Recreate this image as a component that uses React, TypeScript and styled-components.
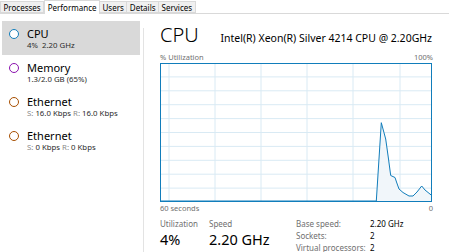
import React from 'react';
import styled, { createGlobalStyle } from 'styled-components';

const GlobalStyle = createGlobalStyle`
  * {
    margin: 0;
    padding: 0;
    box-sizing: border-box;
  }
  html, body {
    width: 449px;
    height: 252px;
    overflow: hidden;
    background: #ffffff;
    font-family: 'Segoe UI', 'Noto Sans', 'Open Sans', sans-serif;
    color: #000;
  }
`;

const Window = styled.div`
  width: 449px;
  height: 252px;
  display: flex;
  flex-direction: column;
`;

const TabBar = styled.div`
  height: 14px;
  display: flex;
  align-items: flex-end;
  border-bottom: 1px solid #d9d9d9;
`;

const Tab = styled.div<{ $active?: boolean; $first?: boolean }>`
  height: ${p => (p.$active ? '14px' : '12px')};
  margin-bottom: ${p => (p.$active ? '-1px' : '0')};
  padding: 0 2.5px;
  font-size: 8px;
  line-height: ${p => (p.$active ? '13px' : '11px')};
  background: ${p => (p.$active ? '#ffffff' : '#f0f0f0')};
  border: 1px solid #d9d9d9;
  border-bottom: ${p => (p.$active ? 'none' : '1px solid #d9d9d9')};
  border-left: ${p => (p.$active || p.$first ? '1px solid #d9d9d9' : 'none')};
  color: #000;
  white-space: nowrap;
`;

const Main = styled.div`
  flex: 1;
  display: flex;
`;

const Sidebar = styled.div`
  width: 143px;
  padding: 7px 3px 0 2px;
  display: flex;
  flex-direction: column;
`;

const Item = styled.div<{ $selected?: boolean }>`
  height: 34px;
  display: flex;
  align-items: flex-start;
  padding: 6px 0 0 7px;
  background: ${p => (p.$selected ? '#d9d9d9' : 'transparent')};
`;

const Dot = styled.div<{ $color: string }>`
  width: 10px;
  height: 10px;
  margin-top: 2px;
  border-radius: 50%;
  border: 1.3px solid ${p => p.$color};
  background: #fff;
  flex-shrink: 0;
`;

const ItemText = styled.div`
  margin-left: 8px;
  display: flex;
  flex-direction: column;
`;

const ItemTitle = styled.div`
  font-size: 11px;
  line-height: 13px;
  color: #000;
`;

const ItemSub = styled.div`
  font-size: 7.8px;
  line-height: 10px;
  color: #2b2b2b;
  white-space: nowrap;
`;

const Muted = styled.span`
  color: #8a8a8a;
`;

const Divider = styled.div`
  width: 1px;
  margin-top: 14px;
  background: #e3e3e3;
`;

const Content = styled.div`
  flex: 1;
  padding: 8px 16px 0 16px;
  display: flex;
  flex-direction: column;
`;

const Header = styled.div`
  display: flex;
  align-items: baseline;
  justify-content: space-between;
  height: 26px;
`;

const BigTitle = styled.div`
  font-size: 20px;
  font-weight: 300;
  line-height: 26px;
`;

const Model = styled.div`
  font-size: 10.5px;
  color: #000;
  white-space: nowrap;
  margin-right: 1px;
`;

const AxisRow = styled.div<{ $top?: number }>`
  display: flex;
  justify-content: space-between;
  font-size: 7.5px;
  line-height: 10px;
  color: #707070;
  margin-top: ${p => p.$top ?? 0}px;
`;

const Chart = styled.svg`
  display: block;
  width: 272px;
  height: 139px;
  margin-top: 1px;
`;

const Stats = styled.div`
  display: flex;
  margin-top: 5px;
`;

const Stat = styled.div<{ $width: number }>`
  width: ${p => p.$width}px;
  display: flex;
  flex-direction: column;
  white-space: nowrap;
`;

const StatLabel = styled.div`
  font-size: 8px;
  line-height: 11px;
  color: #707070;
`;

const StatValue = styled.div`
  font-size: 14.5px;
  line-height: 20px;
  color: #000;
`;

const Specs = styled.div`
  display: grid;
  grid-template-columns: 74px auto;
  grid-auto-rows: 12px;
  font-size: 8px;
  line-height: 12px;
`;

const SpecKey = styled.div`
  color: #707070;
  white-space: nowrap;
`;

const SpecVal = styled.div`
  color: #000;
`;

const hLines = Array.from({ length: 9 }, (_, i) => (i + 1) * 13.9);
const vLines = [9, 55, 101, 147, 193, 240];
const pts: [number, number][] = [
  [0, 138], [216.3, 138], [221.3, 59.7], [225.7, 76], [228.5, 96], [230.7, 112.5],
  [235, 114.5], [236.5, 119], [239, 126], [243, 129.5], [249, 133], [253, 133],
  [257, 129], [261.7, 123], [265, 127], [272, 132.7],
];

function CpuChart() {
  const line = pts.map(p => p.join(',')).join(' ');
  const area = `0,139 ${line} 272,139`;
  return (
    <Chart viewBox="0 0 272 139">
      {hLines.map(y => (
        <line key={y} x1="0" x2="272" y1={y} y2={y} stroke="#d9eaf4" strokeWidth="1" />
      ))}
      {vLines.map(x => (
        <line key={x} x1={x} x2={x} y1="0" y2="139" stroke="#d9eaf4" strokeWidth="1" />
      ))}
      <polygon points={area} fill="#f1f6fa" />
      <polyline points={line} fill="none" stroke="#117dbb" strokeWidth="1" />
      <rect x="0.5" y="0.5" width="271" height="138" fill="none" stroke="#117dbb" strokeWidth="1" />
    </Chart>
  );
}

export default function App() {
  return (
    <>
      <GlobalStyle />
      <Window>
        <TabBar>
          <Tab $first>Processes</Tab>
          <Tab $active>Performance</Tab>
          <Tab>Users</Tab>
          <Tab>Details</Tab>
          <Tab>Services</Tab>
        </TabBar>
        <Main>
          <Sidebar>
            <Item $selected>
              <Dot $color="#117dbb" />
              <ItemText>
                <ItemTitle>CPU</ItemTitle>
                <ItemSub>4%&nbsp;&nbsp;2.20 GHz</ItemSub>
              </ItemText>
            </Item>
            <Item>
              <Dot $color="#8b12ae" />
              <ItemText>
                <ItemTitle>Memory</ItemTitle>
                <ItemSub>1.3/2.0 GB (65%)</ItemSub>
              </ItemText>
            </Item>
            <Item>
              <Dot $color="#a74f01" />
              <ItemText>
                <ItemTitle>Ethernet</ItemTitle>
                <ItemSub><Muted>S:</Muted> 16.0 Kbps <Muted>R:</Muted> 16.0 Kbps</ItemSub>
              </ItemText>
            </Item>
            <Item>
              <Dot $color="#a74f01" />
              <ItemText>
                <ItemTitle>Ethernet</ItemTitle>
                <ItemSub><Muted>S:</Muted> 0 Kbps <Muted>R:</Muted> 0 Kbps</ItemSub>
              </ItemText>
            </Item>
          </Sidebar>
          <Divider />
          <Content>
            <Header>
              <BigTitle>CPU</BigTitle>
              <Model>Intel(R) Xeon(R) Silver 4214 CPU @ 2.20GHz</Model>
            </Header>
            <AxisRow $top={4}>
              <span>% Utilization</span>
              <span>100%</span>
            </AxisRow>
            <CpuChart />
            <AxisRow $top={1}>
              <span>60 seconds</span>
              <span>0</span>
            </AxisRow>
            <Stats>
              <Stat $width={49}>
                <StatLabel>Utilization</StatLabel>
                <StatValue>4%</StatValue>
              </Stat>
              <Stat $width={87}>
                <StatLabel>Speed</StatLabel>
                <StatValue>2.20 GHz</StatValue>
              </Stat>
              <Specs>
                <SpecKey>Base speed:</SpecKey>
                <SpecVal>2.20 GHz</SpecVal>
                <SpecKey>Sockets:</SpecKey>
                <SpecVal>2</SpecVal>
                <SpecKey>Virtual processors:</SpecKey>
                <SpecVal>2</SpecVal>
              </Specs>
            </Stats>
          </Content>
        </Main>
      </Window>
    </>
  );
}
